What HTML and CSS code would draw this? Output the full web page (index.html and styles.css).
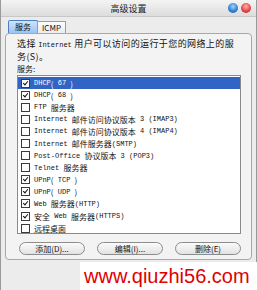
FILE: index.html
```html
<!DOCTYPE html>
<html>
<head>
<meta charset="utf-8">
<link rel="stylesheet" href="styles.css">
</head>
<body>
<div class="window">
  <div class="titlebar">
    <span class="title">高级设置</span>
    <span class="tb-btns"><span class="dot blue"></span><span class="dot red"></span></span>
  </div>
  <div class="tabs">
    <span class="tab active">服务</span>
    <span class="tab">ICMP</span>
  </div>
  <div class="panel">
    <p class="desc">选择 <span class="en">Internet</span> 用户可以访问的运行于您的网络上的服<br>务(S)。</p>
    <p class="label">服务:</p>
    <div class="list">
      <div class="row sel"><span class="cb on"></span><span class="en">DHCP</span>(<span class="en"> 67 </span>)</div>
      <div class="row"><span class="cb on"></span><span class="en">DHCP</span>(<span class="en"> 68 </span>)</div>
      <div class="row"><span class="cb"></span><span class="en">FTP </span>服务器</div>
      <div class="row"><span class="cb"></span><span class="en">Internet </span>邮件访问协议版本<span class="en"> 3 (IMAP3)</span></div>
      <div class="row"><span class="cb"></span><span class="en">Internet </span>邮件访问协议版本<span class="en"> 4 (IMAP4)</span></div>
      <div class="row"><span class="cb"></span><span class="en">Internet </span>邮件服务器<span class="en">(SMTP)</span></div>
      <div class="row"><span class="cb"></span><span class="en">Post-Office </span>协议版本<span class="en"> 3 (POP3)</span></div>
      <div class="row"><span class="cb"></span><span class="en">Telnet </span>服务器</div>
      <div class="row"><span class="cb on"></span><span class="en">UPnP</span>(<span class="en"> TCP </span>)</div>
      <div class="row"><span class="cb on"></span><span class="en">UPnP</span>(<span class="en"> UDP </span>)</div>
      <div class="row"><span class="cb on"></span><span class="en">Web </span>服务器<span class="en">(HTTP)</span></div>
      <div class="row"><span class="cb on"></span>安全<span class="en"> Web </span>服务器<span class="en">(HTTPS)</span></div>
      <div class="row"><span class="cb"></span>远程桌面</div>
    </div>
    <div class="buttons">
      <span class="btn">添加(D)...</span>
      <span class="btn">编辑(I)...</span>
      <span class="btn">删除(E)</span>
    </div>
  </div>
</div>
<div class="watermark">www.qiuzhi56.com</div>
</body>
</html>
```
FILE: styles.css
```css
html, body {
  margin: 0;
  padding: 0;
}
body {
  width: 257px;
  height: 290px;
  overflow: hidden;
  position: relative;
  background: #ebebeb;
  font-family: "Noto Sans CJK SC", sans-serif;
  font-size: 8px;
  color: #111;
}
.window {
  width: 257px;
  height: 290px;
  box-sizing: border-box;
  border-left: 1px solid #9a9a9a;
  border-right: 1px solid #9a9a9a;
  background: #ececec;
  display: flex;
  flex-direction: column;
}
.titlebar {
  height: 17px;
  flex: none;
  position: relative;
  display: flex;
  align-items: center;
  justify-content: center;
  background: linear-gradient(#f4f4f4, #dcdcdc);
  border-bottom: 1px solid #c8c8c8;
  box-sizing: border-box;
}
.title {
  font-size: 9px;
  color: #222;
}
.tb-btns {
  position: absolute;
  right: 5px;
  top: 3px;
  display: flex;
  gap: 3px;
}
.dot {
  width: 10px;
  height: 10px;
  border-radius: 50%;
  display: block;
}
.dot.blue {
  background: radial-gradient(circle at 50% 35%, #9fd6ff, #2b7bd0 60%, #1a4f9a);
}
.dot.red {
  background: radial-gradient(circle at 50% 35%, #ffb0b0, #e04040 60%, #a01818);
}
.tabs {
  height: 16px;
  flex: none;
  display: flex;
  align-items: flex-end;
  padding-left: 7px;
}
.tab {
  height: 11px;
  line-height: 11px;
  padding: 0 4px;
  border: 1px solid #9c9c9c;
  border-bottom: none;
  background: linear-gradient(#fdfdfd, #ececec);
  font-size: 8px;
  margin-right: -1px;
}
.tab.active {
  height: 12px;
  line-height: 12px;
  padding: 0 6px;
  background: linear-gradient(#cfe3fb, #9cc3f0);
  border-color: #4a7fc8;
  border-radius: 2px 2px 0 0;
}
.panel {
  margin: 0 4px;
  height: 227px;
  flex: none;
  border: 1px solid #a8a8a8;
  border-radius: 4px;
  background: #f3f3f3;
  padding: 4px 8px 0 11px;
  box-sizing: border-box;
}
.desc {
  margin: 0;
  font-size: 9px;
  line-height: 12px;
  letter-spacing: 0.4px;
  white-space: nowrap;
}
.desc .en {
  letter-spacing: 0;
}
.label {
  margin: 0 0 1px;
  font-size: 8px;
  line-height: 11px;
}
.en {
  font-family: "Liberation Mono", monospace;
  font-size: 7px;
}
.list {
  width: 224px;
  height: 159px;
  box-sizing: border-box;
  border: 1px solid #8a8a8a;
  background: #fff;
  padding-top: 1px;
}
.row {
  height: 12.1px;
  display: flex;
  align-items: center;
  white-space: pre;
  font-size: 8px;
  padding-left: 3px;
}
.row.sel {
  background: #3164c4;
  color: #fff;
}
.cb {
  width: 7px;
  height: 7px;
  border: 1px solid #3a3a3a;
  background: #fff;
  margin-right: 4px;
  flex: none;
  position: relative;
}
.cb.on::after {
  content: "";
  position: absolute;
  left: 2px;
  top: 0px;
  width: 2px;
  height: 4px;
  border: solid #111;
  border-width: 0 1.5px 1.5px 0;
  transform: rotate(40deg);
}
.buttons {
  display: flex;
  gap: 12px;
  margin-top: 8px;
  padding-left: 2px;
}
.btn {
  width: 64px;
  height: 11px;
  line-height: 11px;
  text-align: center;
  border: 1px solid #8c8c8c;
  border-radius: 7px;
  background: linear-gradient(#fbfbfb, #e2e2e2);
  font-size: 8px;
}
.watermark {
  position: absolute;
  left: 80px;
  top: 262px;
  width: 177px;
  height: 28px;
  background: #fff;
  color: #e00000;
  font-family: "Liberation Sans", sans-serif;
  font-size: 20px;
  line-height: 28px;
  padding-left: 4px;
  box-sizing: border-box;
  white-space: nowrap;
}
```
